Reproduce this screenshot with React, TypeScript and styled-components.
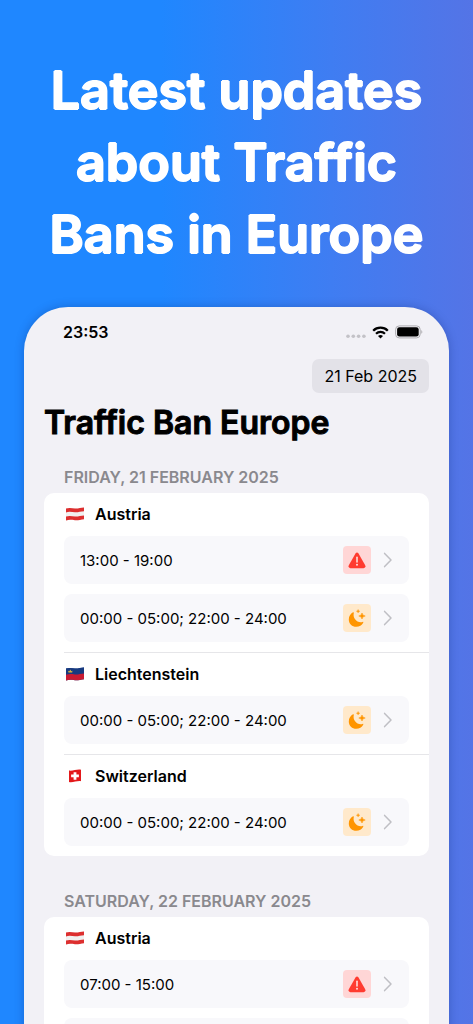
import React from 'react';
import styled, { createGlobalStyle } from 'styled-components';

const Global = createGlobalStyle`
  *, *::before, *::after { box-sizing: border-box; }
  body { margin: 0; }
  body, button { font-family: Inter, "Liberation Sans", sans-serif; color: #000; }
`;

const Page = styled.main`
  height: 100vh;
  overflow: hidden;
  padding: 55px 24px 0;
  background: linear-gradient(90deg, #1f87ff 0%, #1f87ff 34%, #3f7df2 70%, #5474e6 100%);
`;

const Headline = styled.h1`
  margin: 0 0 36px;
  font-size: 52px;
  line-height: 72px;
  font-weight: 600;
  text-align: center;
  color: #fff;
  text-shadow: 1px 0 #fff, -1px 0 #fff, 0 1px #fff, 0 -1px #fff;
`;

const Phone = styled.section`
  min-height: 100vh;
  padding: 1px 20px 0;
  border-radius: 44px 44px 0 0;
  background: #f2f1f6;
  box-shadow: 0 0 10px rgba(0, 20, 80, 0.25);
`;

const StatusBar = styled.div`
  display: flex;
  align-items: center;
  justify-content: space-between;
  height: 48px;
  padding: 0 6px 0 19px;
`;

const Clock = styled.time`
  font-size: 16px;
  font-weight: 600;
`;

const StatusIcons = styled.div`
  display: flex;
  align-items: center;
  gap: 6px;
`;

const Toolbar = styled.div`
  display: flex;
  justify-content: flex-end;
  padding-top: 3px;
`;

const DateButton = styled.button`
  height: 34px;
  padding: 0 12px;
  border: 0;
  border-radius: 7px;
  background: #e3e2e8;
  font-size: 16px;
  white-space: nowrap;
`;

const Title = styled.h2`
  margin: 10px 0 0;
  font-size: 32px;
  line-height: 40px;
  font-weight: 600;
  white-space: nowrap;
  -webkit-text-stroke: 1px #000;
`;

const DayLabel = styled.h3`
  margin: 0;
  padding: 24px 20px 6px;
  font-size: 16px;
  line-height: 20px;
  font-weight: 600;
  color: #8a898e;
  text-transform: uppercase;
  white-space: nowrap;
`;

const Day = styled.section`
  & + & { padding-top: 11px; }
`;

const Card = styled.div`
  border-radius: 10px;
  background: #fff;
`;

const Country = styled.div`
  display: flex;
  flex-direction: column;
  gap: 10px;
  margin-left: 20px;
  padding: 0 20px 10px 0;
  & + & { border-top: 1px solid #e6e6e9; }
`;

const CountryName = styled.h4`
  display: flex;
  align-items: center;
  gap: 9px;
  height: 33px;
  padding-top: 8px;
  margin: 0;
  font-size: 16px;
  font-weight: 600;
`;

const Row = styled.button`
  display: flex;
  align-items: center;
  width: 100%;
  height: 48px;
  padding: 0 16px;
  border: 0;
  border-radius: 8px;
  background: #f8f8fb;
  font-size: 15px;
  text-align: left;
`;

const Hours = styled.span`
  flex: 1;
  white-space: nowrap;
`;

const Badge = styled.span<{ $kind: Kind }>`
  display: flex;
  align-items: center;
  justify-content: center;
  width: 28px;
  height: 28px;
  margin-right: 12px;
  border-radius: 4px;
  background: ${p => (p.$kind === 'alert' ? '#ffd6d6' : '#ffe9cb')};
`;

const NextRowEdge = styled.div`
  height: 48px;
  border-radius: 8px;
  background: #f8f8fb;
`;

type Kind = 'alert' | 'night';
type Flag = 'at' | 'li' | 'ch';
type Ban = { hours: string; kind: Kind };
type CountryBans = { name: string; flag: Flag; bans: Ban[] };
type DayBans = { label: string; countries: CountryBans[]; more?: boolean };

const night: Ban = { hours: '00:00 - 05:00; 22:00 - 24:00', kind: 'night' };

const days: DayBans[] = [
  {
    label: 'Friday, 21 February 2025',
    countries: [
      { name: 'Austria', flag: 'at', bans: [{ hours: '13:00 - 19:00', kind: 'alert' }, night] },
      { name: 'Liechtenstein', flag: 'li', bans: [night] },
      { name: 'Switzerland', flag: 'ch', bans: [night] },
    ],
  },
  {
    label: 'Saturday, 22 February 2025',
    countries: [{ name: 'Austria', flag: 'at', bans: [{ hours: '07:00 - 15:00', kind: 'alert' }] }],
    more: true,
  },
];

function FlagIcon({ flag }: { flag: Flag }) {
  if (flag === 'ch') {
    return (
      <svg width="22" height="16" viewBox="0 0 22 16" aria-hidden="true">
        <path d="M5 2.6C9 3.2 13 1 17 1.8V13.2C13 12.6 9 14.8 5 14Z" fill="#e3191b" />
        <path d="M9.6 4.2h2.8v2.4h2.5v2.7h-2.5v2.5H9.6V9.3H7.1V6.6h2.5z" fill="#fff" />
      </svg>
    );
  }
  const [top, middle, bottom] = flag === 'at' ? ['#dd2f2f', '#f1f0f0', '#dd2f2f'] : ['#173a80', '#173a80', '#c81b33'];
  return (
    <svg width="22" height="16" viewBox="0 0 22 16" aria-hidden="true">
      <clipPath id={`wave-${flag}`}>
        <path d="M2 2.6C5 1.4 8 2.2 11 2.4C14 2.6 17 1.6 20 1.4V13.2C17 13.6 14 14.4 11 14.2C8 14 5 13.4 2 14.6Z" />
      </clipPath>
      <g clipPath={`url(#wave-${flag})`}>
        <rect width="22" height="16" fill={middle} />
        <path d="M2 0H20V5.2C17 5.4 14 6.4 11 6.2C8 6 5 5.2 2 6.4Z" fill={top} />
        <path
          d={flag === 'at'
            ? 'M2 10.6C5 9.4 8 10.2 11 10.4C14 10.6 17 9.6 20 9.4V16H2Z'
            : 'M2 8.8C5 7.6 8 8.2 11 8.4C14 8.6 17 7.6 20 7.4V16H2Z'}
          fill={bottom}
        />
        {flag === 'li' && <path d="M4.4 6.6L4.2 4.8L5.4 5.2L6.3 3.6L7.2 5.2L8.4 4.8L8.2 6.6Z" fill="#d8b43f" />}
      </g>
    </svg>
  );
}

function AlertIcon() {
  return (
    <svg width="18" height="17" viewBox="0 0 18 17" role="img" aria-label="Ban">
      <path d="M7.5 1.5Q9-.6 10.5 1.5L17.2 13.3Q18.2 16 15.6 16.2H2.4Q-.2 16 .8 13.3Z" fill="#ff3b30" />
      <path d="M9 5.2V10" stroke="#ffdcda" strokeWidth="1.6" strokeLinecap="round" />
      <circle cx="9" cy="12.7" r="1" fill="#ffdcda" />
    </svg>
  );
}

function NightIcon() {
  return (
    <svg width="18" height="18" viewBox="0 0 18 18" role="img" aria-label="Night ban">
      <path
        d="M5 3.3C5.6 3 6 3.4 5.8 4C4.6 8.6 8.2 13.2 12.8 13.2C13.5 13.2 14.1 13.1 14.6 12.9C15.2 12.7 15.5 13.1 15.2 13.7C13.9 16.2 11.3 17.8 8.3 17.8C4.1 17.8.8 14.5.8 10.4C.8 7.3 2.5 4.6 5 3.3Z"
        fill="#ff9500"
      />
      <path d="M14 4Q14.3 6.7 17.2 7Q14.3 7.3 14 10Q13.7 7.3 10.8 7Q13.7 6.7 14 4Z" fill="#ff9500" stroke="#ff9500" strokeWidth=".6" />
      <path d="M10.1.4Q10.3 2 11.9 2.2Q10.3 2.4 10.1 4Q9.9 2.4 8.3 2.2Q9.9 2 10.1.4Z" fill="#ff9500" stroke="#ff9500" strokeWidth=".3" />
    </svg>
  );
}

function Chevron() {
  return (
    <svg width="10" height="16" viewBox="0 0 10 16" aria-hidden="true">
      <path d="M1.6 1.4L8 8L1.6 14.6" fill="none" stroke="#bfbfc4" strokeWidth="1.5" strokeLinecap="round" strokeLinejoin="round" />
    </svg>
  );
}

function SignalIcon() {
  return (
    <svg width="20" height="14" viewBox="0 0 20 14" aria-hidden="true">
      {[2, 7.3, 12.6, 17.9].map(x => <circle key={x} cx={x} cy="11.3" r="1.8" fill="#c3c2c7" />)}
    </svg>
  );
}

function WifiIcon() {
  return (
    <svg width="17" height="13" viewBox="0 0 17 13" aria-hidden="true">
      <path d="M1.2 4.7A10.4 10.4 0 0 1 15.8 4.7" fill="none" stroke="#000" strokeWidth="2.3" />
      <path d="M4 7.7A6.5 6.5 0 0 1 13 7.7" fill="none" stroke="#000" strokeWidth="2.2" />
      <path d="M8.5 12.6L6 10.1Q8.5 8 11 10.1Z" fill="#000" />
    </svg>
  );
}

function BatteryIcon() {
  return (
    <svg width="28" height="14" viewBox="0 0 28 14" aria-hidden="true">
      <rect x=".6" y=".9" width="24.6" height="12" rx="3.6" fill="none" stroke="#adacb0" strokeWidth="1" />
      <rect x="2.1" y="2.3" width="21.6" height="9.2" rx="2.3" fill="#000" />
      <path d="M26.3 5.1Q28.4 6.9 26.3 8.8Z" fill="#adacb0" />
    </svg>
  );
}

function BanRow({ ban }: { ban: Ban }) {
  return (
    <Row type="button">
      <Hours>{ban.hours}</Hours>
      <Badge $kind={ban.kind}>{ban.kind === 'alert' ? <AlertIcon /> : <NightIcon />}</Badge>
      <Chevron />
    </Row>
  );
}

export default function App() {
  return (
    <>
      <Global />
      <Page>
        <Headline>Latest updates<br />about Traffic<br />Bans in Europe</Headline>
        <Phone>
          <StatusBar>
            <Clock>23:53</Clock>
            <StatusIcons>
              <SignalIcon />
              <WifiIcon />
              <BatteryIcon />
            </StatusIcons>
          </StatusBar>
          <Toolbar>
            <DateButton type="button">21 Feb 2025</DateButton>
          </Toolbar>
          <Title>Traffic Ban Europe</Title>
          {days.map(day => (
            <Day key={day.label}>
              <DayLabel>{day.label}</DayLabel>
              <Card>
                {day.countries.map(country => (
                  <Country key={country.name}>
                    <CountryName><FlagIcon flag={country.flag} />{country.name}</CountryName>
                    {country.bans.map(ban => <BanRow key={ban.hours} ban={ban} />)}
                    {day.more && <NextRowEdge />}
                  </Country>
                ))}
              </Card>
            </Day>
          ))}
        </Phone>
      </Page>
    </>
  );
}
